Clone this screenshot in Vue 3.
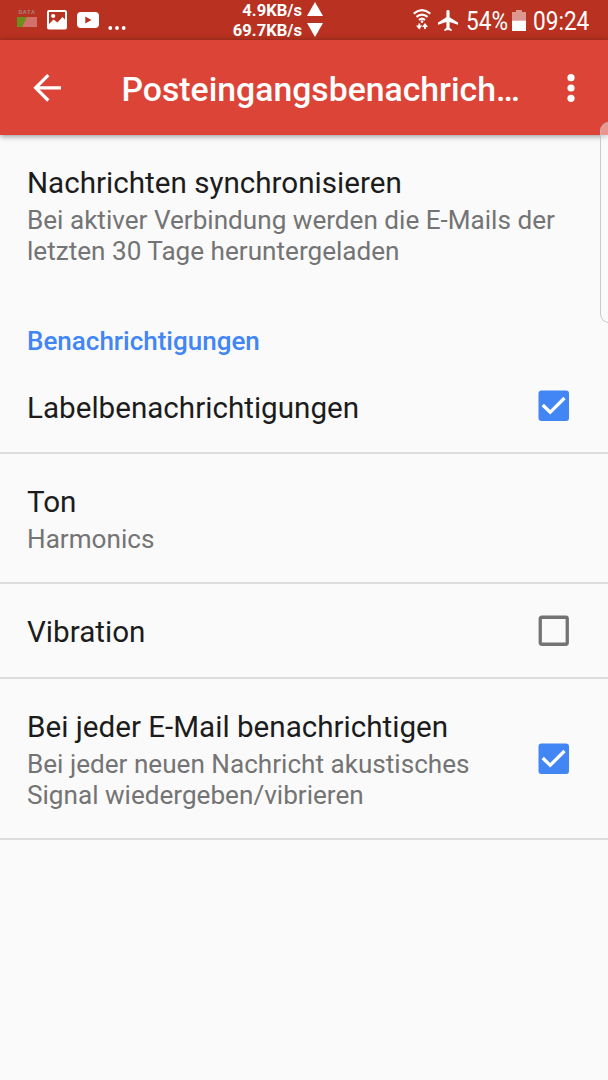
<script setup>
import { ref } from 'vue'

const rows = ref([
  { title: 'Labelbenachrichtigungen', checked: true },
  { title: 'Ton', lines: ['Harmonics'] },
  { title: 'Vibration', checked: false },
  {
    title: 'Bei jeder E-Mail benachrichtigen',
    lines: ['Bei jeder neuen Nachricht akustisches', 'Signal wiedergeben/vibrieren'],
    checked: true,
  },
])

function toggle(row) {
  if (row.checked !== undefined) row.checked = !row.checked
}
</script>

<template>
  <div class="screen">
    <div class="status">
      <div class="status-left">
        <div class="data">
          <span>DATA</span>
          <svg width="20" height="10" viewBox="0 0 20 10">
            <rect width="20" height="10" fill="#d4706a" />
            <path d="M0 0H10L5 10H0Z" fill="#6a8f1c" />
          </svg>
        </div>
        <svg class="picture" width="20" height="20" viewBox="0 0 20 20">
          <path fill="#fff" fill-rule="evenodd" d="M2 0H18Q20 0 20 2V17.500Q20 19.500 18 19.500H2Q0 19.500 0 17.500V2Q0 0 2 0ZM2 2V14L6.500 9.500L10.500 12.500L15.500 7L18 9.500V2Z" />
          <circle cx="6.200" cy="6" r="2.100" fill="#fff" />
        </svg>
        <svg class="video" width="22" height="16" viewBox="0 0 22 16">
          <rect width="22" height="16" rx="4" fill="#fff" />
          <path d="M8.300 4.500L14.500 8L8.300 11.500Z" fill="#b93221" />
        </svg>
        <svg class="more" width="18" height="4" viewBox="0 0 18 4" fill="#fff">
          <circle cx="2.300" cy="2" r="1.900" /><circle cx="9" cy="2" r="1.900" /><circle cx="15.700" cy="2" r="1.900" />
        </svg>
      </div>
      <div class="speed">
        <div class="speed-line">
          <span>4.9KB/s</span>
          <svg width="16" height="14" viewBox="0 0 16 14"><path d="M8 0L16 14H0Z" fill="#fff" /></svg>
        </div>
        <div class="speed-line">
          <span>69.7KB/s</span>
          <svg width="16" height="14" viewBox="0 0 16 14"><path d="M0 0H16L8 14Z" fill="#fff" /></svg>
        </div>
      </div>
      <div class="status-right">
        <svg class="wifi" width="18" height="22" viewBox="0 0 18 22" fill="none" stroke="#fff">
          <path stroke-width="2.100" d="M0.700 4.600Q9 -2.300 17.300 4.600M3.400 7.900Q9 3.200 14.600 7.900M6 11Q9 8.400 12 11" />
          <circle cx="9" cy="12.600" r="1.300" fill="#fff" stroke="none" />
          <path stroke-width="1.800" d="M6.300 14.500V18M12 20V16.500" />
          <path fill="#fff" stroke="none" d="M3 16.500H9.300L6.200 20.500ZM9 18H15L12 14Z" />
        </svg>
        <svg class="plane" width="20" height="21" viewBox="2 2 19 20" preserveAspectRatio="none">
          <path fill="#fff" d="M21 16v-2l-8-5V3.500c0-.83-.67-1.500-1.500-1.500S10 2.670 10 3.500V9l-8 5v2l8-2.500V19l-2 1.500V22l3.500-1 3.500 1v-1.500L13 19v-5.500l8 2.500z" />
        </svg>
        <span class="percent">54%</span>
        <svg class="battery" width="14" height="21" viewBox="0 0 14 21">
          <path d="M4 0H10V2H14V10.500H0V2H4Z" fill="#dc9890" />
          <rect y="10.500" width="14" height="10.500" fill="#fff" />
        </svg>
        <span class="clock">09:24</span>
      </div>
    </div>

    <header class="appbar">
      <svg class="back" width="28" height="28" viewBox="0 0 28 28" fill="none" stroke="#fff" stroke-width="3.200">
        <path d="M15.300 1.800L2.600 14.500L15.300 27.200M3 14.500H28" transform="translate(0 -.7)" />
      </svg>
      <h1>Posteingangsbenachrich…</h1>
      <svg class="menu" width="8" height="28" viewBox="0 0 8 28" fill="#fff">
        <circle cx="4" cy="3.700" r="3.600" /><circle cx="4" cy="14" r="3.600" /><circle cx="4" cy="24.300" r="3.600" />
      </svg>
    </header>

    <main>
      <section class="row intro">
        <div class="text">
          <div class="title">Nachrichten synchronisieren</div>
          <div class="sub">Bei aktiver Verbindung werden die E-Mails der<br />letzten 30 Tage heruntergeladen</div>
        </div>
      </section>
      <h2>Benachrichtigungen</h2>
      <section v-for="(row, i) in rows" :key="row.title" class="row" :class="{ first: i === 0 }" @click="toggle(row)">
        <div class="text">
          <div class="title">{{ row.title }}</div>
          <div v-if="row.lines" class="sub">
            <div v-for="line in row.lines" :key="line">{{ line }}</div>
          </div>
        </div>
        <svg v-if="row.checked !== undefined" class="check" width="31" height="31" viewBox="0 0 31 31">
          <template v-if="row.checked">
            <rect x=".5" y=".5" width="30.500" height="30.500" rx="3" fill="#4285f4" />
            <path d="M4.700 15L12.200 22.300L26.500 8" fill="none" stroke="#fff" stroke-width="3.300" />
          </template>
          <rect v-else x="2.250" y="2.250" width="27" height="27" rx="1.500" fill="none" stroke="#737373" stroke-width="3.300" />
        </svg>
      </section>
    </main>
    <div class="edge"></div>
  </div>
</template>

<style>
body { margin: 0; background: #fafafa; }
</style>

<style scoped>
.screen {
  position: relative;
  width: 608px;
  height: 1080px;
  overflow: hidden;
  background: #fafafa;
  font-family: Roboto, sans-serif;
  white-space: nowrap;
}
.status {
  display: grid;
  grid-template-columns: 233px 180px 1fr;
  height: 40px;
  background: #b93221;
  color: #fff;
}
.status-left, .status-right { display: flex; align-items: flex-start; }
.data { display: flex; flex-direction: column; width: 20px; margin: 9px 0 0 17px; }
.data span { height: 8px; font-size: 6px; line-height: 6px; letter-spacing: 0.6px; font-weight: 500; color: #a48a84; text-align: center; }
.picture { margin: 10px 0 0 10px; }
.video { margin: 12px 0 0 10px; }
.more { margin: 26px 0 0 9px; }
.speed { display: flex; flex-direction: column; width: 90px; }
.speed-line { display: flex; justify-content: flex-end; align-items: center; gap: 5px; height: 20px; font-size: 16.600px; font-weight: 700; line-height: 20px; }
.speed-line span { padding-top: 1px; }
.speed-line svg { flex: none; }
.speed-line:first-child svg { margin-top: -3px; }
.speed-line:last-child svg { margin-top: -1px; }
.wifi { margin: 9px 0 0 0; }
.plane { margin: 10px 0 0 7px; }
.percent, .clock { display: block; font-size: 26px; line-height: 30px; transform-origin: 0 50%; transform: scaleX(0.87); margin-top: 6px; }
.percent { width: 41px; margin-left: 8px; }
.battery { margin: 10px 0 0 5px; }
.clock { margin-left: 7px; }
.appbar {
  position: relative;
  display: flex;
  align-items: center;
  height: 95px;
  background: #dc4437;
  color: #fff;
  box-shadow: 0 1px 6px rgba(0, 0, 0, 0.45);
}
.back { margin-left: 33px; }
h1 { width: 400px; margin: 5px 0 0 60.500px; font-size: 33.750px; line-height: 40px; font-weight: 500; }
.menu { margin-left: 45.500px; }
.row { display: flex; justify-content: space-between; align-items: center; box-sizing: border-box; padding: 30px 39px 27px 27px; border-bottom: 2px solid #dcdcdc; }
.intro { border: 0; }
.first { padding-top: 33px; padding-bottom: 26px; }
.title { font-size: 29.620px; line-height: 36px; color: #1c1c1c; }
.sub { margin-top: 4px; font-size: 26.120px; line-height: 31px; color: #747474; }
h2 { margin: 32px 27px 0; font-size: 26px; line-height: 31px; font-weight: 500; color: #4285f4; }
.check { flex: none; margin-top: -4px; }
.first .check { margin-top: -6px; }
.edge {
  position: absolute;
  right: -10px;
  top: 122px;
  width: 18px;
  height: 201px;
  box-sizing: border-box;
  border: 1px solid rgba(190, 190, 190, 0.8);
  border-radius: 9px;
  background: rgba(250, 250, 250, 0.45);
}
</style>
